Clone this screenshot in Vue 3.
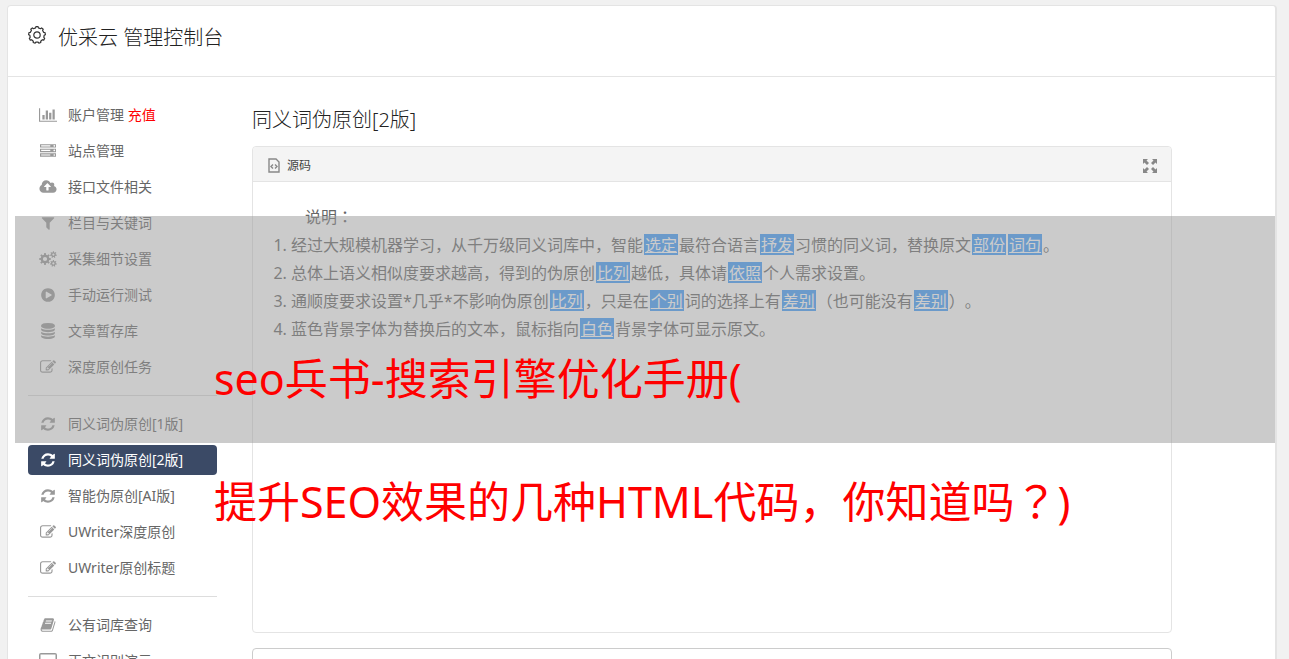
<script setup>
function gear(cx, cy, outer, inner, teeth) {
  const step = (Math.PI * 2) / teeth
  const points = []
  for (let i = 0; i < teeth; i++) {
    const a = i * step - Math.PI / 2
    for (const [offset, r] of [[-0.28, inner], [-0.18, outer], [0.18, outer], [0.28, inner]]) {
      const t = a + offset * step
      points.push(`${(cx + r * Math.cos(t)).toFixed(1)} ${(cy + r * Math.sin(t)).toFixed(1)}`)
    }
  }
  return `M${points.join('L')}z`
}
function hole(cx, cy, r) {
  return `M${cx - r} ${cy}a${r} ${r} 0 1 0 ${2 * r} 0a${r} ${r} 0 1 0 ${-2 * r} 0z`
}

const icons = {
  chart: { box: '0 0 2048 1792', width: 18, d: 'M640 896v512h-256v-512h256zm384-512v1024h-256v-1024h256zm1024 1152v128h-2048v-1536h128v1408h1920zm-640-896v768h-256v-768h256zm384-384v1152h-256v-1152h256z' },
  server: { box: '0 0 1792 1792', width: 16, d: 'M128 1408h1024v-128h-1024v128zm0-512h1024v-128h-1024v128zm1568 448q0-40-28-68t-68-28-68 28-28 68 28 68 68 28 68-28 28-68zm-1568-960h1024v-128h-1024v128zm1568 448q0-40-28-68t-68-28-68 28-28 68 28 68 68 28 68-28 28-68zm0-512q0-40-28-68t-68-28-68 28-28 68 28 68 68 28 68-28 28-68zm96 832v384h-1792v-384h1792zm0-512v384h-1792v-384h1792zm0-512v384h-1792v-384h1792z' },
  cloud: { box: '-64 0 1920 1792', width: 18, d: 'M1216 864q0-14-9-23l-352-352q-9-9-23-9t-23 9l-351 351q-10 12-10 24 0 14 9 23t23 9h224v352q0 13 9.5 22.5t22.5 9.5h192q13 0 22.5-9.5t9.5-22.5v-352h224q13 0 22.5-9.5t9.5-22.5zm640 288q0 159-112.5 271.5t-271.5 112.5h-1088q-185 0-316.5-131.5t-131.5-316.5q0-130 70-240t188-165q-2-30-2-43 0-212 150-362t362-150q156 0 285.5 87t188.5 231q71-62 166-62 106 0 181 75t75 181q0 76-41 138 130 31 213.5 135.5t83.5 238.5z' },
  filter: { box: '0 0 1792 1792', width: 16, d: 'M1595 295q17 41-14 70l-493 493v742q0 42-39 59-13 5-25 5-27 0-45-19l-256-256q-19-19-19-45v-486l-493-493q-31-29-14-70 17-39 59-39h1280q42 0 59 39z' },
  cogs: { box: '0 0 18 16', width: 18, d: gear(6, 8, 6, 4.4, 8) + hole(6, 8, 2.1) + gear(14.4, 3.6, 3.4, 2.4, 7) + hole(14.4, 3.6, 1.1) + gear(14.4, 12.4, 3.4, 2.4, 7) + hole(14.4, 12.4, 1.1) },
  play: { box: '0 0 1792 1792', width: 16, d: 'M896 128q209 0 385.5 103t279.5 279.5 103 385.5-103 385.5-279.5 279.5-385.5 103-385.5-103-279.5-279.5-103-385.5 103-385.5 279.5-279.5 385.5-103zm384 823q32-18 32-55t-32-55l-544-320q-31-19-64-1-32 19-32 56v640q0 37 32 56 16 8 32 8 17 0 32-9z' },
  database: { box: '0 0 1792 1792', width: 16, d: 'M896 768q237 0 443-43t325-127v170q0 69-103 128t-280 93.5-385 34.5-385-34.5-280-93.5-103-128v-170q119 84 325 127t443 43zm0 768q237 0 443-43t325-127v170q0 69-103 128t-280 93.5-385 34.5-385-34.5-280-93.5-103-128v-170q119 84 325 127t443 43zm0-384q237 0 443-43t325-127v170q0 69-103 128t-280 93.5-385 34.5-385-34.5-280-93.5-103-128v-170q119 84 325 127t443 43zm0-1152q208 0 385 34.5t280 93.5 103 128v128q0 69-103 128t-280 93.5-385 34.5-385-34.5-280-93.5-103-128v-128q0-69 103-128t280-93.5 385-34.5z' },
  edit: { box: '0 0 1792 1792', width: 16, d: 'M888 1184l116-116-152-152-116 116v56h96v96h56zm440-720q-16-16-33 1l-350 350q-17 17-1 33t33-1l350-350q17-17 1-33zm80 594v190q0 119-84.5 203.5t-203.5 84.5h-832q-119 0-203.5-84.5t-84.5-203.5v-832q0-119 84.5-203.5t203.5-84.5h832q63 0 117 25 15 7 18 23 3 17-9 29l-49 49q-14 14-32 8-23-6-45-6h-832q-66 0-113 47t-47 113v832q0 66 47 113t113 47h832q66 0 113-47t47-113v-126q0-13 9-22l64-64q15-15 35-7t20 29zm-96-738l288 288-672 672h-288v-288zm444 132l-92 92-288-288 92-92q28-28 68-28t68 28l152 152q28 28 28 68t-28 68z' },
  refresh: { box: '0 0 1792 1792', width: 16, d: 'M1639 1056q0 5-1 7-64 268-268 434.5t-478 166.5q-146 0-282.5-55t-243.5-157l-129 129q-19 19-45 19t-45-19-19-45v-448q0-26 19-45t45-19h448q26 0 45 19t19 45-19 45l-137 137q71 66 161 102t187 36q134 0 250-65t186-179q11-17 53-117 8-23 30-23h192q13 0 22.5 9.5t9.5 22.5zm25-800v448q0 26-19 45t-45 19h-448q-26 0-45-19t-19-45 19-45l138-138q-148-137-349-137-134 0-250 65t-186 179q-11 17-53 117-8 23-30 23h-199q-13 0-22.5-9.5t-9.5-22.5v-7q65-268 270-434.5t480-166.5q146 0 284 55.5t245 156.5l130-129q19-19 45-19t45 19 19 45z' },
  book: { box: '0 0 1792 1792', width: 16, d: 'M1703 478q40 57 18 129l-275 906q-19 64-76.5 107.5t-122.5 43.5h-923q-77 0-148.5-53.5t-99.5-131.5q-24-67-2-127 0-4 3-27t4-37q1-8-3-21.5t-3-19.5q2-11 8-21t16.5-23.5 16.5-23.5q23-38 45-91.5t30-91.5q3-10 .5-30t-.5-28q3-11 17-28t17-23q21-36 42-92t25-90q1-9-2.5-32t.5-28q4-13 22-30.5t22-22.5q19-26 42.5-84.5t27.5-96.5q1-8-3-25.5t-2-26.5q2-8 9-18t18-23 17-21q8-12 16.5-30.5t15-35 16-36 19.5-32 26.5-23.5 36-11.5 47.5 5.5l-1 3q38-9 51-9h761q74 0 114 56t18 130l-274 906q-36 119-71.5 153.5t-128.5 34.5h-869q-27 0-38 15-11 16-1 43 24 70 144 70h923q29 0 56-15.5t35-41.5l300-987q7-22 5-57 38 15 59 43zm-1064 2q-4 13 2 22.5t20 9.5h608q13 0 25.5-9.5t16.5-22.5l21-64q4-13-2-22.5t-20-9.5h-608q-13 0-25.5 9.5t-16.5 22.5zm-83 256q-4 13 2 22.5t20 9.5h608q13 0 25.5-9.5t16.5-22.5l21-64q4-13-2-22.5t-20-9.5h-608q-13 0-25.5 9.5t-16.5 22.5z' },
  screen: { box: '0 0 18 16', width: 18, d: 'M2 0h14q2 0 2 2v9q0 2-2 2h-5v1.500h2v1.500h-8v-1.500h2v-1.500h-5q-2 0-2-2v-9q0-2 2-2zM1.500 1.500v10h15v-10z' }
}

const groups = [
  [
    { icon: 'chart', label: '账户管理', extra: '充值' },
    { icon: 'server', label: '站点管理' },
    { icon: 'cloud', label: '接口文件相关' },
    { icon: 'filter', label: '栏目与关键词' },
    { icon: 'cogs', label: '采集细节设置' },
    { icon: 'play', label: '手动运行测试' },
    { icon: 'database', label: '文章暂存库' },
    { icon: 'edit', label: '深度原创任务' }
  ],
  [
    { icon: 'refresh', label: '同义词伪原创[1版]' },
    { icon: 'refresh', label: '同义词伪原创[2版]', active: true },
    { icon: 'refresh', label: '智能伪原创[AI版]' },
    { icon: 'edit', label: 'UWriter深度原创' },
    { icon: 'edit', label: 'UWriter原创标题' }
  ],
  [
    { icon: 'book', label: '公有词库查询' },
    { icon: 'screen', label: '正文识别演示' }
  ]
]

// Odd entries of each line are the replaced words.
const notes = [
  ['经过大规模机器学习，从千万级同义词库中，智能', '选定', '最符合语言', '抒发', '习惯的同义词，替换原文', '部份', '', '词句', '。'],
  ['总体上语义相似度要求越高，得到的伪原创', '比列', '越低，具体请', '依照', '个人需求设置。'],
  ['通顺度要求设置*几乎*不影响伪原创', '比列', '，只是在', '个别', '词的选择上有', '差别', '（也可能没有', '差别', '）。'],
  ['蓝色背景字体为替换后的文本，鼠标指向', '白色', '背景字体可显示原文。']
]

const headGear = gear(9, 9, 8.4, 7.2, 9)
</script>

<template>
  <div class="page" lang="zh-CN">
    <div class="card">
      <header class="top">
        <svg class="top-icon" width="18" height="18" viewBox="0 0 18 18" aria-hidden="true">
          <path :d="headGear" />
          <circle cx="9" cy="9" r="3.2" />
        </svg>
        <h1>优采云 管理控制台</h1>
      </header>

      <div class="body">
        <nav class="side">
          <ul v-for="(group, g) in groups" :key="g">
            <li v-for="item in group" :key="item.label">
              <a href="#" :class="{ active: item.active }">
                <span class="icon">
                  <svg :width="icons[item.icon].width" height="16" :viewBox="icons[item.icon].box" aria-hidden="true">
                    <path fill-rule="evenodd" :d="icons[item.icon].d" />
                  </svg>
                </span>
                <span class="label">{{ item.label }} <em v-if="item.extra">{{ item.extra }}</em></span>
              </a>
            </li>
          </ul>
        </nav>

        <main>
          <h2>同义词伪原创[2版]</h2>
          <section class="editor">
            <div class="toolbar">
              <button type="button">
                <svg width="12" height="15" viewBox="0 0 12 15" aria-hidden="true">
                  <path class="line" d="M1 1h7l3 3v10h-10z" />
                  <path class="line" d="M5 6.500l-2 2 2 2M7 6.500l2 2-2 2" />
                </svg>
                <span class="label">源码</span>
              </button>
              <button type="button" aria-label="全屏">
                <svg width="14" height="14" viewBox="0 0 14 14" aria-hidden="true">
                  <path d="M0 0h5l-1.500 1.500 2.500 2.500-2 2-2.500-2.500L0 5zM14 0v5l-1.500-1.500L10 6 8 4l2.500-2.500L9 0zM0 14V9l1.500 1.500L4 8l2 2-2.500 2.500L5 14zM14 14H9l1.500-1.500L8 10l2-2 2.500 2.500L14 9z" />
                </svg>
              </button>
            </div>
            <div class="text">
              <p>说明<span class="centered" lang="ja">：</span></p>
              <ol>
                <li v-for="(line, i) in notes" :key="i"><template v-for="(part, j) in line" :key="j"><mark v-if="j % 2">{{ part }}</mark><template v-else>{{ part }}</template></template></li>
              </ol>
            </div>
          </section>
          <section class="result"></section>
        </main>
      </div>
    </div>

    <div class="banner">
      <p>seo兵书-搜索引擎优化手册(</p>
      <p>提升SEO效果的几种HTML代码，你知道吗<span class="centered" lang="ja">？</span>)</p>
    </div>
  </div>
</template>

<style>
body {
  background: #f1f1f1;
}
</style>

<style scoped>
.page {
  position: relative;
  height: 100vh;
  overflow: hidden;
  font-family: "Noto Sans", "Noto Sans CJK SC", sans-serif;
  font-weight: 300;
  color: #222;
  text-spacing-trim: space-all;
}
h1, h2, p, ul, ol {
  margin: 0;
  padding: 0;
  font-weight: inherit;
}
.centered {
  font-family: "Noto Sans CJK JP", sans-serif;
}
.card {
  margin: 5px 12px 0 7px;
  background: #fff;
  border: 1px solid #e4e4e4;
  border-right-width: 2px;
  border-radius: 4px 4px 0 0;
  min-height: 100vh;
}
.top {
  display: flex;
  align-items: flex-start;
  gap: 12px;
  height: 53px;
  padding: 17px 20px 0;
  border-bottom: 1px solid #e4e4e4;
}
.top-icon {
  margin-top: 3px;
  fill: none;
  stroke: #333;
  stroke-width: 1.2;
  stroke-linejoin: round;
}
h1 {
  font-size: 20px;
  line-height: 30px;
}
.body {
  display: flex;
  padding: 23px 103px 0 20px;
}
.side {
  flex: 0 0 189px;
  margin-right: 35px;
}
ul {
  list-style: none;
  display: grid;
  gap: 6px;
}
ul + ul {
  margin-top: 13px;
  padding-top: 13px;
  border-top: 1px solid #ddd;
}
.side a {
  display: flex;
  align-items: center;
  height: 30px;
  padding-left: 10px;
  border-radius: 4px;
  font-size: 14px;
  font-weight: 400;
  color: #666;
  text-decoration: none;
}
.icon {
  display: flex;
  justify-content: center;
  width: 20px;
  margin-right: 10px;
}
.icon svg {
  fill: #999;
}
.label {
  padding-bottom: 2px;
}
.side em {
  font-style: normal;
  color: #f00;
}
.side .active {
  background: #3b4a66;
  color: #fff;
}
.active svg {
  fill: #fff;
}
main {
  flex: 1;
  min-width: 0;
  padding-top: 5px;
}
h2 {
  font-size: 20px;
  line-height: 30px;
  margin-bottom: 11px;
}
.editor {
  border: 1px solid #e4e4e4;
  border-radius: 4px;
  min-height: 485px;
}
.toolbar {
  display: flex;
  justify-content: space-between;
  height: 34px;
  padding: 0 14px 0 15px;
  background: #f4f4f4;
  border-bottom: 1px solid #e4e4e4;
  border-radius: 4px 4px 0 0;
}
.toolbar button {
  display: flex;
  align-items: center;
  gap: 7px;
  padding: 3px 0 0;
  border: 0;
  background: none;
  font: inherit;
  font-size: 12px;
  font-weight: 400;
  color: #444;
}
.toolbar svg {
  fill: #888;
}
.toolbar .line {
  fill: none;
  stroke: #888;
  stroke-width: 1.4;
}
.text {
  padding: 20px;
  font-size: 16px;
  line-height: 28px;
  font-weight: 400;
  color: #666;
}
.text p {
  text-indent: 2em;
}
ol {
  padding-left: 18px;
}
mark {
  display: inline-block;
  padding: 0 1px;
  margin: 0 1px;
  line-height: 23px;
  height: 21px;
  color: #fff;
  background: #3f9dfd;
  text-decoration: underline;
}
.result {
  margin-top: 15px;
  height: 200px;
  border: 1px solid #ccc;
  border-radius: 4px;
}
/* Translucent caption laid over the page */
.banner {
  position: absolute;
  top: 216px;
  left: 15px;
  right: 14px;
  height: 227px;
  box-sizing: border-box;
  padding: 103px 0 0 199px;
  background: rgba(151, 151, 151, 0.5);
  font-size: 43px;
  line-height: 120px;
  font-weight: 400;
  color: #f00;
  white-space: nowrap;
}
</style>
